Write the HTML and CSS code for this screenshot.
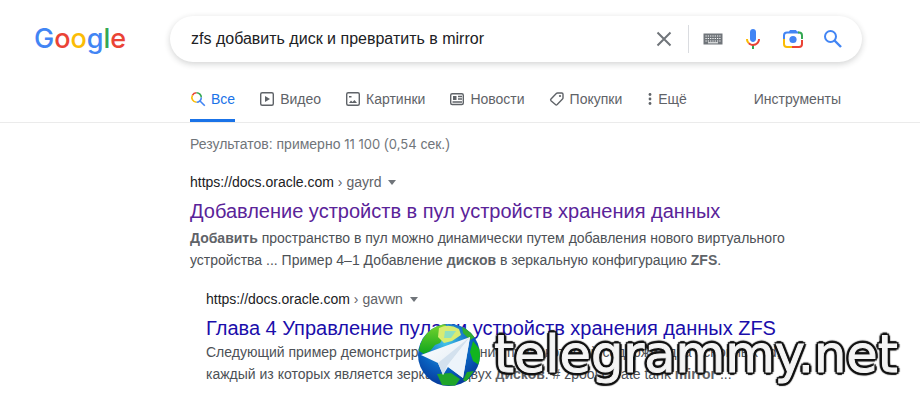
FILE: index.html
```html
<!DOCTYPE html>
<html lang="ru">
<head>
<meta charset="UTF-8">
<meta name="viewport" content="width=device-width, initial-scale=1.0">
<title>zfs добавить диск и превратить в mirror - Поиск в Google</title>
<link rel="stylesheet" href="styles.css">
</head>
<body>

<header class="header">
  <a class="logo" href="#" aria-label="Google"><span class="blue">G</span><span class="red">o</span><span class="yellow">o</span><span class="blue">g</span><span class="green">l</span><span class="red">e</span></a>
  <form class="search-box">
    <input class="search-input" type="text" aria-label="Найти" value="zfs добавить диск и превратить в mirror">
    <button class="icon-btn clear-btn" type="button" aria-label="Очистить">
      <svg width="24" height="24" viewBox="0 0 24 24"><path d="M5.500 5.500l13 13M18.500 5.500l-13 13" fill="none" stroke="#70757a" stroke-width="2"/></svg>
    </button>
    <button class="icon-btn" type="button" aria-label="Экранная клавиатура">
      <svg width="24" height="24" viewBox="0 0 24 24">
        <path d="M2.500 6.500h19v11h-19z" fill="#70757a"/>
        <path d="M4.500 9h15M4.500 11.500h15M4.500 14h15" fill="none" stroke="#fff" stroke-width="1.200" stroke-dasharray="1.200 1.100"/>
        <path d="M7 15.800h10" stroke="#fff" stroke-width="1"/>
      </svg>
    </button>
    <button class="icon-btn" type="button" aria-label="Голосовой поиск">
      <svg width="24" height="24" viewBox="0 0 24 24">
        <path fill="#4285f4" d="M12 15c1.660 0 3-1.310 3-2.970V4.960C15 3.300 13.660 2 12 2S9 3.300 9 4.960v7.070C9 13.690 10.340 15 12 15z"/>
        <path fill="#34a853" d="M11 18h2v4h-2z"/>
        <path fill="#fbbc05" d="M7.050 16.870C5.780 15.560 5 13.900 5 12h2c0 1.450.560 2.420 1.470 3.380z"/>
        <path fill="#ea4335" d="M12 16.930a4.970 4.970 0 0 1-3.540-1.550l-1.410 1.490C8.310 18.160 10.030 19 12 19c3.870 0 7-2.920 7-7h-2c0 2.920-2.240 4.930-5 4.930z"/>
      </svg>
    </button>
    <button class="icon-btn" type="button" aria-label="Поиск по картинке">
      <svg width="24" height="24" viewBox="0 0 24 24" fill="none" stroke-width="2">
        <path stroke="#4285f4" d="M3 12V8.500Q3 5.500 6 5.500h12"/>
        <path fill="#4285f4" d="M7.500 5.500L9 3h6l1.500 2.500z"/>
        <path stroke="#34a853" d="M17 5.500h1Q21 5.500 21 8.500V12"/>
        <path stroke="#fbbc05" d="M3 12v5Q3 20 6 20h5"/>
        <path stroke="#ea4335" d="M11 20h7Q21 20 21 17v-4"/>
        <circle cx="12" cy="12.500" r="3.600" fill="#4285f4"/>
      </svg>
    </button>
    <button class="icon-btn" type="submit" aria-label="Поиск">
      <svg width="24" height="24" viewBox="0 0 24 24"><circle cx="9.500" cy="9.500" r="5.500" fill="none" stroke="#4285f4" stroke-width="2"/><path d="M13.500 13.500l6.500 6.500" stroke="#4285f4" stroke-width="2.400"/></svg>
    </button>
  </form>
</header>

<nav class="tabs">
  <a class="tab active" href="#">
    <svg width="16" height="16" viewBox="0 0 16 16" fill="none" stroke-width="1.600">
      <path stroke="#ea4335" d="M2.400 4.300A4.800 4.800 0 0 1 6.500 1.700"/>
      <path stroke="#34a853" d="M6.500 1.700A4.800 4.800 0 0 1 11.300 6.500"/>
      <path stroke="#4285f4" d="M11.300 6.500A4.800 4.800 0 0 1 6.500 11.300M10 10l4.800 4.800"/>
      <path stroke="#fbbc05" d="M6.500 11.300A4.800 4.800 0 0 1 2.400 4.300"/>
    </svg>Все</a>
  <a class="tab" href="#">
    <svg width="16" height="16" viewBox="0 0 16 16"><rect x="1.700" y="1.700" width="12.600" height="12.600" rx="1.500" fill="none" stroke="#5f6368" stroke-width="1.400"/><path d="M6 5l5 3-5 3z" fill="#5f6368"/></svg>Видео</a>
  <a class="tab" href="#">
    <svg width="16" height="16" viewBox="0 0 16 16"><rect x="1.700" y="1.700" width="12.600" height="12.600" rx="1.500" fill="none" stroke="#5f6368" stroke-width="1.400"/><path d="M4 12l2-2.500 1.500 1.500L9.500 9l2.500 3zM4 5h2.500v1.500H4z" fill="#5f6368"/></svg>Картинки</a>
  <a class="tab" href="#">
    <svg width="16" height="16" viewBox="0 0 16 16" fill="none" stroke="#5f6368" stroke-width="1.400"><rect x="1.700" y="2.700" width="12.600" height="10.800" rx="1.500"/><path d="M9 5.500h4M9 8h4M3.500 11h9.500"/><path d="M4 5h3.500v4H4z" fill="#5f6368" stroke="none"/></svg>Новости</a>
  <a class="tab" href="#">
    <svg width="16" height="16" viewBox="0 0 16 16"><path d="M8.500 2h4.300q1.200 0 1.200 1.200v3.600q0 .700-.500 1.200l-5.300 5.500q-.900.800-1.800 0L2 9.800q-.800-.900 0-1.800L7.300 2.500q.500-.500 1.200-.500z" fill="none" stroke="#5f6368" stroke-width="1.400"/><circle cx="11" cy="5" r="1.100" fill="#5f6368"/></svg>Покупки</a>
  <button class="tab more" type="button">
    <svg width="7" height="16" viewBox="0 0 7 16" fill="#5f6368"><circle cx="4" cy="3.500" r="1.400"/><circle cx="4" cy="8" r="1.400"/><circle cx="4" cy="12.500" r="1.400"/></svg>Ещё</button>
  <button class="tab tools" type="button">Инструменты</button>
</nav>

<main class="results">
  <p class="stats">Результатов: примерно <span class="num">11 100</span> (<span class="num">0,54</span> сек.)</p>

  <article class="result">
    <div class="source"><cite>https://docs.oracle.com <span class="crumb">› gayrd</span></cite><button class="arrow" type="button" aria-label="Подробнее"></button></div>
    <h3><a class="visited" href="#">Добавление устройств в пул устройств хранения данных</a></h3>
    <p class="snippet"><b>Добавить</b> пространство в пул можно динамически путем добавления нового виртуального устройства ... Пример 4–1 Добавление <b>дисков</b> в зеркальную конфигурацию <b>ZFS</b>.</p>
  </article>

  <article class="result nested">
    <div class="source"><cite>https://docs.oracle.com <span class="crumb">› gavwn</span></cite><button class="arrow" type="button" aria-label="Подробнее"></button></div>
    <h3><a href="#">Глава 4 Управление пулами устройств хранения данных ZFS</a></h3>
    <p class="snippet">Следующий пример демонстрирует создание пула, который содержит два основных vd,<br>каждый из которых является зеркалом двух <b>дисков</b>. # zpool create tank <b>mirror</b> ...</p>
  </article>
</main>

<div class="watermark">
  <svg width="64" height="64" viewBox="0 0 64 64">
    <defs>
      <radialGradient id="sea" cx="45%" cy="30%" r="70%"><stop offset="0" stop-color="#43c4e8"/><stop offset=".6" stop-color="#0a62c0"/><stop offset="1" stop-color="#063a9b"/></radialGradient>
      <linearGradient id="land" x1="0" y1="0" x2="0" y2="1"><stop offset="0" stop-color="#7ad52e"/><stop offset="1" stop-color="#0fa51d"/></linearGradient>
      <linearGradient id="wing" x1="0" y1="0" x2="1" y2="1"><stop offset="0" stop-color="#fff"/><stop offset="1" stop-color="#dce8f2"/></linearGradient>
      <clipPath id="globe"><circle cx="32" cy="32" r="31"/></clipPath>
    </defs>
    <circle cx="32" cy="32" r="31" fill="url(#sea)"/>
    <g clip-path="url(#globe)">
      <path d="M3 22Q8 8 21 2L28 0L31 8L27 13L23 20L18 22L13 28L7 31L2 28z" fill="url(#land)"/>
      <path d="M22 5Q32 0 42 6L44 12L35 18L27 20L21 14z" fill="#d8ec72"/>
      <path d="M28 8L39 8L34 15L27 15z" fill="#8ee0c0"/>
      <path d="M45 3L60 13L53 17L46 10z" fill="#30ae31"/>
      <path d="M56 18L64 28L62 42L56 38L53 29z" fill="#12b41f"/>
      <path d="M20 51L34 50L43 56L38 63L25 62z" fill="#20a52a"/>
      <path d="M50 49L57 48L49 59L46 57z" fill="#20a52a"/>
    </g>
    <path d="M4 32L53 14L46 55L31 44L26 52L21 40z" fill="url(#wing)"/>
    <path d="M21 40L53 14L30 43L26 52z" fill="#d3e1ee"/>
    <path d="M30 43L53 14L46 55z" fill="#edf4fb"/>
  </svg>
  <span class="watermark-name">telegrammy.net</span>
</div>

</body>
</html>
```
FILE: styles.css
```css
* {
  box-sizing: border-box;
}

body {
  margin: 0;
  background: #fff;
  color: #202124;
  font-family: "Liberation Sans", Arial, sans-serif;
  font-size: 14px;
}

a {
  color: #1a0dab;
  text-decoration: none;
}

button {
  padding: 0;
  border: 0;
  background: none;
  font: inherit;
}

svg {
  display: block;
  flex: none;
}

/* search bar */
.header {
  display: flex;
  align-items: center;
  padding: 16px 58px 0 34px;
}

.logo {
  width: 136px;
  font-family: Inter, sans-serif;
  font-size: 27px;
  line-height: 44px;
  font-weight: 500;
}

.blue { color: #4285f4; }
.red { color: #ea4335; }
.yellow { color: #fbbc05; }
.green { color: #34a853; }

.search-box {
  display: flex;
  flex: 1;
  align-items: center;
  height: 46px;
  padding: 0 17px 0 21px;
  border-radius: 24px;
  background: #fff;
  box-shadow: 0 2px 6px rgba(32, 33, 36, .2);
}

.search-input {
  flex: 1;
  min-width: 0;
  padding: 0;
  border: 0;
  outline: 0;
  color: #202124;
  font: 16px "Liberation Sans", Arial, sans-serif;
}

.icon-btn {
  width: 24px;
  height: 24px;
  margin-left: 16px;
}

.clear-btn {
  width: 37px;
  height: 28px;
  margin-left: 0;
  margin-right: -4px;
  border-right: 1px solid #dadce0;
}

/* tabs */
.tabs {
  display: flex;
  gap: 24px;
  height: 61px;
  padding: 13px 79px 0 190px;
  border-bottom: 1px solid #ebebeb;
}

.tab {
  display: flex;
  align-items: center;
  gap: 5px;
  color: #5f6368;
}

.active {
  border-bottom: 3px solid #1a73e8;
  padding-top: 3px;
  color: #1a73e8;
}

.tools {
  margin-left: auto;
}

/* results */
.results {
  max-width: 850px;
  padding-left: 190px;
}

.stats {
  margin: 0;
  padding-top: 12px;
  color: #70757a;
  line-height: 18px;
}

.num {
  font-family: Inter, sans-serif;
  font-size: 13px;
}

.result {
  padding-top: 20px;
}

.source {
  display: flex;
  align-items: center;
  line-height: 18px;
}

cite {
  font-style: normal;
}

.crumb {
  color: #5f6368;
}

.arrow {
  margin-left: 7px;
  border: 4px solid transparent;
  border-top: 5px solid #70757a;
  border-bottom: 0;
}

h3 {
  margin: 0;
  padding: 7px 0 3px;
  font-size: 20px;
  font-weight: 400;
  line-height: 26px;
}

.visited {
  color: #5a2399;
}

.snippet {
  margin: 0;
  color: #4d5156;
  line-height: 22px;
}

.snippet b {
  color: #5f6368;
}

.nested {
  padding: 19px 0 0 16px;
}

.nested h3 {
  padding-bottom: 0;
}

/* site mark over the results */
.watermark {
  position: absolute;
  top: 323px;
  left: 417px;
  display: flex;
  gap: 13px;
}

.watermark-name {
  color: #f4f4f4;
  font: 51px/64px "DejaVu Sans", sans-serif;
  -webkit-text-stroke: 1px #f4f4f4;
  text-shadow: 3px 0 1px #111, -3px 0 1px #111, 0 3px 1px #111, 0 -3px 1px #111,
    2px 2px 1px #111, -2px 2px 1px #111, 2px -2px 1px #111, -2px -2px 1px #111;
}
```
